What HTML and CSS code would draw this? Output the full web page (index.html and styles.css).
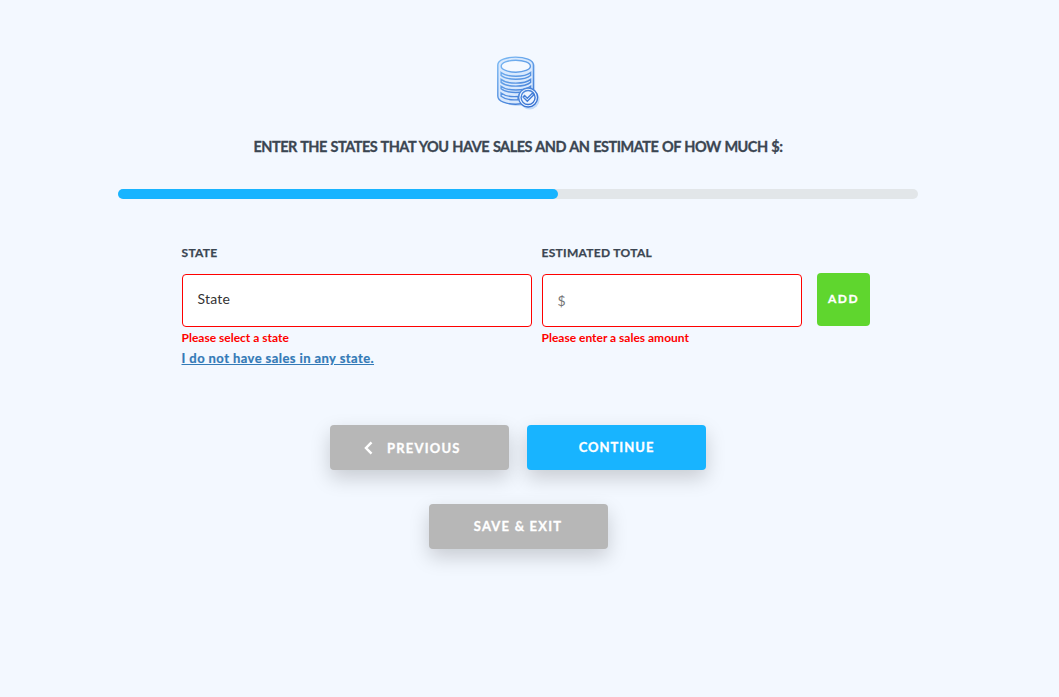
FILE: index.html
```html
<!DOCTYPE html>
<html lang="en">
<head>
<meta charset="utf-8">
<title>Estimated sales by state</title>
<link rel="stylesheet" href="styles.css">
</head>
<body>
<main class="wizard">
  <svg class="hero-icon" viewBox="0.9 0 65 75" fill="none" aria-hidden="true">
    <defs>
      <linearGradient id="blue" x1="12" y1="12" x2="50" y2="62" gradientUnits="userSpaceOnUse">
        <stop offset="0" stop-color="#7dbcf5"/>
        <stop offset="1" stop-color="#356fd0"/>
      </linearGradient>
    </defs>
    <path d="M16 21v31c0 5 8 9 17 9s17-4 17-9V21c0-9-34-9-34 0z" fill="#c5dcf8"/>
    <circle cx="44.500" cy="54.500" r="10" fill="#c5dcf8"/>
    <g stroke="url(#blue)" stroke-width="1.4">
      <path d="M12.700 20c0-10.500 35.600-10.500 35.600 0v31c0 11-35.600 11-35.600 0z" fill="#d9e9fd"/>
      <ellipse cx="30.700" cy="21.200" rx="14.600" ry="6" fill="#f5f9ff"/>
      <path d="M16 27.500c6 5 23.500 5 29.500 0v3c-6 5-23.500 5-29.500 0z"/>
      <path d="M16 34.400c6 5 23.500 5 29.500 0v3c-6 5-23.500 5-29.500 0z"/>
      <path d="M16 41.300c6 5 23.500 5 29.500 0v2.500c-6 5-23.500 5-29.500 0z"/>
      <path d="M16 48c4 3.200 11 4 17 3.500v3.200c-6 .5-13-.3-17-3.500z"/>
      <circle cx="43" cy="52.500" r="9.500" fill="#eef5ff"/>
      <circle cx="43" cy="52.500" r="7"/>
      <path d="M38 52l1.500-1.500 2.700 2.700 5-5 1.500 1.500-6.500 6.500z"/>
    </g>
  </svg>
  <h1 class="title">ENTER THE STATES THAT YOU HAVE SALES AND AN ESTIMATE OF HOW MUCH $:</h1>
  <div class="progress"><div class="progress-fill"></div></div>
  <form class="sales-form">
    <div class="field field-state">
      <div class="label">STATE</div>
      <div class="control">State</div>
      <div class="error">Please select a state</div>
      <a class="no-sales" href="#">I do not have sales in any state.</a>
    </div>
    <div class="field field-total">
      <div class="label">ESTIMATED TOTAL</div>
      <div class="control control-money">$</div>
      <div class="error">Please enter a sales amount</div>
    </div>
    <button class="add" type="button">ADD</button>
  </form>
  <nav class="actions">
    <button class="btn btn-muted btn-previous" type="button"><svg class="chevron" viewBox="0 0 9 13" fill="none"><path d="M7.500 1.300L2 7l5.500 5.700" stroke="#fff" stroke-width="2.500"/></svg><span>PREVIOUS</span></button>
    <button class="btn btn-primary" type="button">CONTINUE</button>
    <button class="btn btn-muted" type="button">SAVE &amp; EXIT</button>
  </nav>
</main>
</body>
</html>
```

FILE: styles.css
```css
* { box-sizing: border-box; }
body {
  margin: 0;
  min-height: 697px;
  background: #f3f8ff;
  color: #3b4652;
  font-family: Lato, "Liberation Sans", sans-serif;
}
.wizard {
  width: 800px;
  margin-left: 118px;
  padding-top: 45px;
  display: flex;
  flex-direction: column;
  align-items: center;
}
.hero-icon { width: 65px; height: 75px; display: block; }
.title {
  margin: 17px 0 0;
  font-size: 14.5px;
  line-height: 20px;
  font-weight: 700;
  letter-spacing: -0.52px;
  word-spacing: 0.8px;
  -webkit-text-stroke: 0.3px;
  white-space: nowrap;
}
.progress {
  width: 100%;
  height: 10px;
  margin-top: 32px;
  border-radius: 5px;
  background: #e2e6e9;
}
.progress-fill {
  width: 55%;
  height: 100%;
  border-radius: 5px;
  background: #18b4ff;
}
.sales-form {
  align-self: flex-start;
  display: flex;
  align-items: flex-start;
  margin: 45px 0 0 64px;
}
.field-state { width: 350px; margin-right: 10px; }
.field-total { width: 260px; margin-right: 15px; }
.label {
  height: 30px;
  margin-left: -0.5px;
  font-size: 12px;
  line-height: 18px;
  font-weight: 700;
  letter-spacing: 0.3px;
  -webkit-text-stroke: 0.25px;
}
.control {
  height: 53px;
  padding-left: 14.5px;
  border: 1px solid #f00;
  border-radius: 4px;
  background: #fff;
  color: #333;
  font-size: 14px;
  line-height: 48px;
  letter-spacing: 0.2px;
}
.control-money { color: #757575; line-height: 52px; }
.error {
  margin: 2px 0 0 -0.5px;
  color: #f00;
  font-size: 12px;
  line-height: 18px;
  font-weight: 700;
}
.no-sales {
  display: block;
  margin: 2px 0 0 -0.5px;
  color: #337ab7;
  font-size: 13px;
  line-height: 18px;
  font-weight: 700;
  letter-spacing: 0.42px;
  -webkit-text-stroke: 0.2px;
}
.add, .btn {
  padding: 0;
  border: 0;
  border-radius: 4px;
  color: #fff;
  font-family: inherit;
  font-weight: 700;
  -webkit-text-stroke: 0.3px;
}
.add {
  width: 53px;
  height: 53px;
  margin-top: 29px;
  background: #5fd62e;
  font-size: 12px;
  letter-spacing: 1.5px;
  padding-bottom: 2px;
}
.actions {
  width: 376px;
  display: flex;
  flex-wrap: wrap;
  justify-content: center;
  gap: 34px 18px;
  margin-top: 58px;
}
.btn {
  width: 179px;
  height: 45px;
  font-size: 13px;
  letter-spacing: 1.2px;
  display: flex;
  align-items: center;
  justify-content: center;
  padding-bottom: 2px;
  box-shadow: 0 8px 20px rgba(0, 0, 0, 0.18);
}
.btn-muted { background: #b7b7b7; }
.btn-primary { background: #18b4ff; letter-spacing: 1px; }
.btn-previous { justify-content: flex-start; padding: 0 0 0 34px; }
.chevron { width: 9px; height: 13px; margin-right: 14px; overflow: visible; }
```
